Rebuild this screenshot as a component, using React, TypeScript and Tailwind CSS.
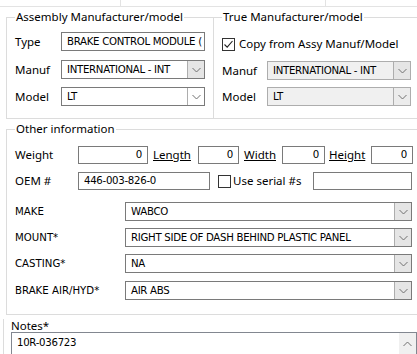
import React from "react";

const UI = "font-['Noto_Sans',sans-serif] text-[11.5px] leading-[14px] text-black";
const TH = "font-['DejaVu_Sans',sans-serif] text-[10.2px] leading-[12px] text-black";
const TV = "font-['DejaVu_Sans',sans-serif] text-[10.2px] leading-[12px] tracking-[-0.3px] text-black";

function Chevron({ up = false }: { up?: boolean }) {
  return (
    <svg width="9" height="6" viewBox="0 0 9 6">
      <path
        d={up ? "M0.5 5 L4.5 1 L8.5 5" : "M0.5 1 L4.5 5 L8.5 1"}
        fill="none"
        stroke="#707070"
        strokeWidth="1"
      />
    </svg>
  );
}

function Combo({
  value,
  w,
  disabled = false,
  btn = "bg-[#e5e5e5]",
}: {
  value: string;
  w: string;
  disabled?: boolean;
  btn?: string;
}) {
  return (
    <div
      className={`flex h-[19px] ${w} border ${
        disabled ? "border-[#adadad] bg-[#f0f0f0]" : "border-[#7a7a7a] bg-white"
      }`}
    >
      <div className={`flex-1 flex items-center pl-[5px] overflow-hidden whitespace-nowrap ${TV}`}>
        {value}
      </div>
      <div className={`w-[17px] border-l border-[#adadad] flex items-center justify-center ${btn}`}>
        <Chevron />
      </div>
    </div>
  );
}

function TextBox({
  value,
  w,
  right = false,
  h = "h-[19px]",
}: {
  value: string;
  w: string;
  right?: boolean;
  h?: string;
}) {
  return (
    <div
      className={`flex items-center ${h} ${w} border border-[#7a7a7a] bg-white overflow-hidden whitespace-nowrap ${
        right ? "justify-end pr-[5px]" : "pl-[5px]"
      } ${TV}`}
    >
      {value}
    </div>
  );
}

function Check({ checked }: { checked: boolean }) {
  return (
    <div className="w-[13px] h-[13px] border border-[#333333] bg-white flex items-center justify-center">
      {checked && (
        <svg width="11" height="11" viewBox="0 0 11 11">
          <path d="M1.5 5.5 L4.2 8.2 L9.5 2" fill="none" stroke="#222222" strokeWidth="1.1" />
        </svg>
      )}
    </div>
  );
}

function Title({ children, left = "left-[8px]" }: { children: React.ReactNode; left?: string }) {
  return (
    <span className={`absolute top-[-8px] ${left} bg-white px-[1px] ${UI}`}>{children}</span>
  );
}

export default function App() {
  return (
    <div className="w-[417px] h-[354px] overflow-hidden bg-white relative">
      {/* top strip */}
      <div className="flex h-[7px] border-b border-[#e3e3e3]">
        <div className="w-[121px] border-r border-[#e3e3e3]" />
        <div className="w-[205px] border-r border-[#e3e3e3]" />
      </div>

      {/* top group boxes */}
      <div className="mt-[10px] ml-[6px] flex h-[102px] border-b border-[#dcdcdc]">
        <div className="relative w-[207px] border-l border-t border-[#dcdcdc] pl-[8px]">
          <Title>Assembly Manufacturer/model</Title>
          <div className="flex items-center mt-[14px] h-[19px]">
            <span className={`w-[46px] ${UI}`}>Type</span>
            <TextBox value="BRAKE CONTROL MODULE (" w="w-[144px]" />
          </div>
          <div className="flex items-center mt-[9px] h-[19px]">
            <span className={`w-[46px] ${UI}`}>Manuf</span>
            <Combo value="INTERNATIONAL - INT" w="w-[144px]" btn="bg-[#e5e5e5]" />
          </div>
          <div className="flex items-center mt-[8px] h-[19px]">
            <span className={`w-[46px] ${UI}`}>Model</span>
            <Combo value="LT" w="w-[144px]" btn="bg-white" />
          </div>
        </div>
        <div className="relative flex-1 border-l border-t border-[#dcdcdc] pl-[8px]">
          <Title>True Manufacturer/model</Title>
          <div className="flex items-center gap-[4px] mt-[19px] h-[14px]">
            <Check checked />
            <span className={UI}>Copy from Assy Manuf/Model</span>
          </div>
          <div className="flex items-center mt-[10px] h-[19px]">
            <span className={`w-[45px] ${UI}`}>Manuf</span>
            <Combo value="INTERNATIONAL - INT" w="w-[144px]" disabled btn="bg-[#e5e5e5]" />
          </div>
          <div className="flex items-center mt-[7px] h-[19px]">
            <span className={`w-[45px] ${UI}`}>Model</span>
            <Combo value="LT" w="w-[144px]" disabled btn="bg-[#ececec]" />
          </div>
        </div>
      </div>

      {/* other information */}
      <div className="relative mt-[10px] ml-[6px] h-[186px] border-l border-t border-b border-[#dcdcdc] pl-[8px]">
        <Title>Other information</Title>
        <div className="flex items-center mt-[16px] h-[18px]">
          <span className={`w-[63px] ${UI}`}>Weight</span>
          <TextBox value="0" w="w-[70px]" right h="h-[18px]" />
          <span className={`ml-[5px] w-[45px] underline ${UI}`}>Length</span>
          <TextBox value="0" w="w-[41px]" right h="h-[18px]" />
          <span className={`ml-[5px] w-[38px] underline ${UI}`}>Width</span>
          <TextBox value="0" w="w-[43px]" right h="h-[18px]" />
          <span className={`ml-[4px] w-[42px] underline ${UI}`}>Height</span>
          <TextBox value="0" w="w-[42px]" right h="h-[18px]" />
        </div>
        <div className="flex items-center mt-[8px] h-[18px]">
          <span className={`w-[63px] ${UI}`}>OEM #</span>
          <TextBox value="446-003-826-0" w="w-[132px]" h="h-[18px]" />
          <div className="ml-[8px]">
            <Check checked={false} />
          </div>
          <span className={`ml-[2px] w-[80px] ${UI}`}>Use serial #s</span>
          <TextBox value="" w="w-[99px]" h="h-[18px]" />
        </div>
        {[
          ["MAKE", "WABCO", "mt-[12px]"],
          ["MOUNT*", "RIGHT SIDE OF DASH BEHIND PLASTIC PANEL", "mt-[7px]"],
          ["CASTING*", "NA", "mt-[7px]"],
          ["BRAKE AIR/HYD*", "AIR ABS", "mt-[8px]"],
        ].map(([label, value, mt]) => (
          <div key={label} className={`flex items-center ${mt} h-[19px]`}>
            <span className={`w-[110px] ${TH}`}>{label}</span>
            <Combo value={value} w="w-[287px]" />
          </div>
        ))}
      </div>

      {/* notes */}
      <div className="ml-[3px] mt-[4px] border-l border-[#dcdcdc] pl-[7px]">
        <div className={`${UI} h-[13px]`}>Notes*</div>
        <div className="mt-[0px] h-[40px] border border-[#828790] bg-white flex">
          <div className={`flex-1 pl-[5px] pt-[4px] ${TV}`}>10R-036723</div>
          <div className="w-[17px] bg-[#f0f0f0] flex justify-center pt-[8px]">
            <Chevron up />
          </div>
        </div>
      </div>
    </div>
  );
}
